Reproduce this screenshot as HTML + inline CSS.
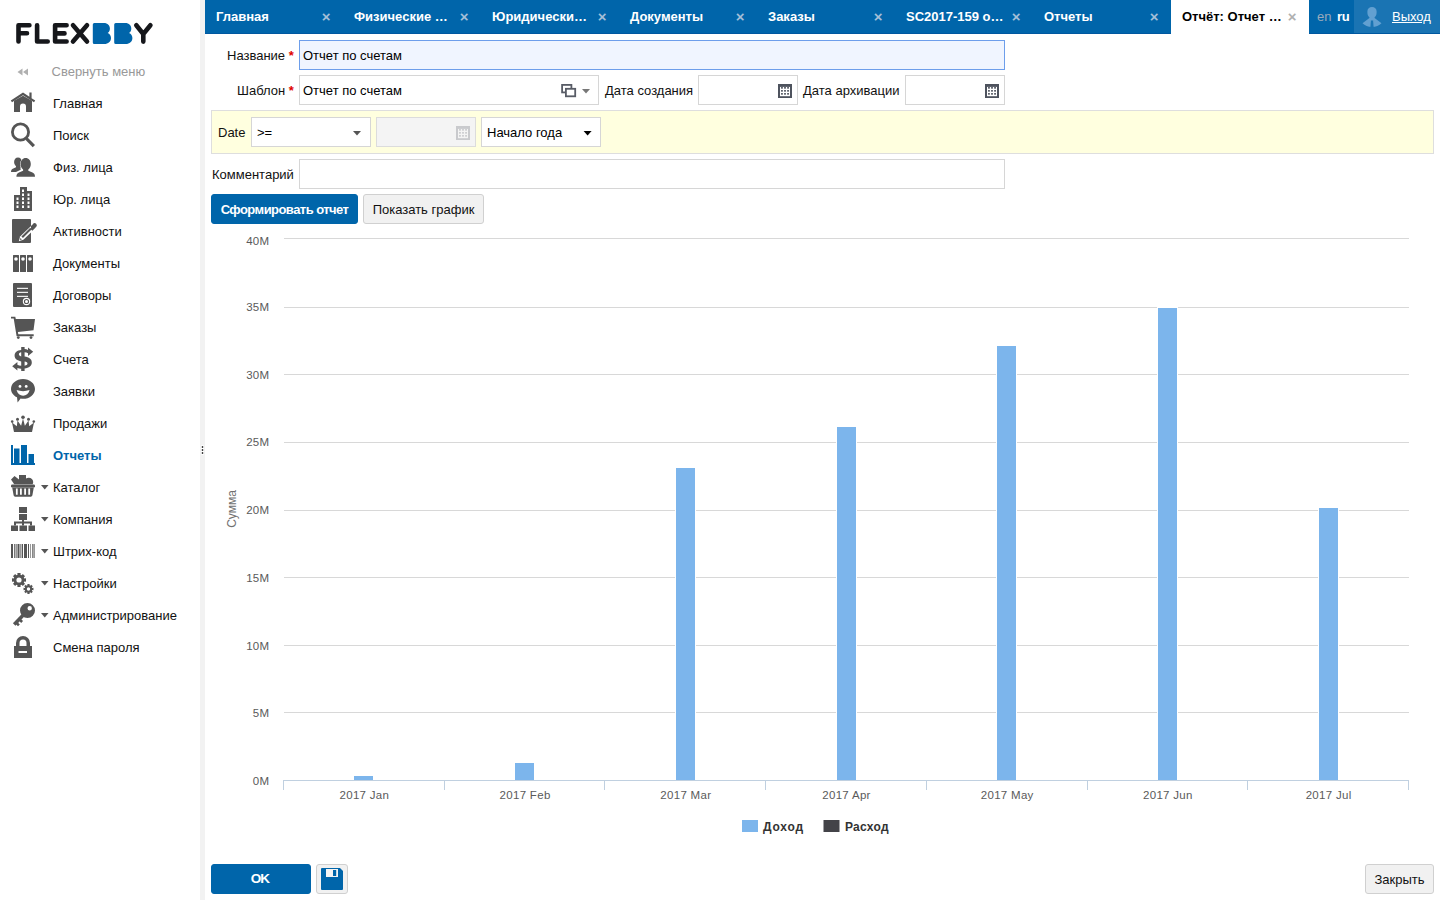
<!DOCTYPE html>
<html><head><meta charset="utf-8">
<style>
*{box-sizing:border-box;margin:0;padding:0}
html,body{width:1440px;height:900px;overflow:hidden;background:#fff;font-family:"Liberation Sans",sans-serif;font-size:14px;color:#000}
.abs{position:absolute}
#side{position:absolute;left:0;top:0;width:200px;height:900px;background:#fff}
#split{position:absolute;left:200px;top:0;width:5px;height:900px;background:#f2f2f2}
#tabs{position:absolute;left:205px;top:0;width:1235px;height:34px;background:#0065aa;border-bottom:1px solid #0058a0}
.tab{position:absolute;top:0;height:34px;width:138px;color:#fff;font-weight:bold;font-size:13px;line-height:33px;padding-left:11px}
.tab .x{position:absolute;right:12.500px;top:0;font-weight:bold;font-size:15px;color:#a3bfd8}
.tab.act{background:#fff;color:#000}
.tab.act .x{color:#b0b0b0}
.mi{position:absolute;left:53px;margin-top:1px;font-size:13px;line-height:16px;color:#111}
.lbl{position:absolute;margin-top:1px;font-size:13px;line-height:16px;color:#111;white-space:nowrap}
.inp{position:absolute;height:30px;border:1px solid #d6d6d6;background:#fff;font-size:13px;line-height:28px;padding-left:3px;padding-top:1px;white-space:nowrap}
.btn{position:absolute;height:30px;border-radius:3px;font-size:13px;line-height:28px;padding-top:1px;text-align:center;white-space:nowrap}
.btn.blue{background:#0065aa;color:#fff;font-weight:bold;border:1px solid #0065aa;letter-spacing:-0.55px}
.btn.grey{background:#f1f1f1;color:#111;border:1px solid #d0d0d0}
.red{color:#e00000;font-weight:bold}
</style></head><body>
<div id="side">
<svg class="abs" style="left:0;top:0" width="200" height="700" viewBox="0 0 200 700"><g fill="none" stroke="#16171b" stroke-width="4.600" stroke-linecap="round" stroke-linejoin="round">
<path d="M18.500 41.500V25.300H29.400M18.500 33.300H27"/>
<path d="M37.100 25.300V41.500H47.700"/>
<path d="M66.600 25.300H55.100V41.500H66.600M55.100 33.400H64.500"/>
<path d="M73 25.300L87 41.500M87 25.300L73 41.500"/>
<path d="M136.300 25.300L143.300 34L150.400 25.300M143.300 34V41.600"/>
</g>
<path d="M94.3 23 H103.8 C107.8 23 109.9 25.5 109.9 28.5 C109.9 30.500 109.1 32 107.64999999999999 33.1 C109.8 34 111.0 36 111.0 38 C111.0 41.500 108.3 44 104.3 44 H94.3 Q92.8 44 92.8 42.500 V24.500 Q92.8 23 94.3 23Z" fill="#0065aa"/><path d="M115.7 23 H125.2 C129.2 23 131.3 25.5 131.3 28.5 C131.3 30.500 130.5 32 129.05 33.1 C131.2 34 132.4 36 132.4 38 C132.4 41.500 129.7 44 125.7 44 H115.7 Q114.2 44 114.2 42.500 V24.500 Q114.2 23 115.7 23Z" fill="#0065aa"/>

<!-- collapse -->
<path d="M22.500 68.500v7l-5-3.500zM28 68.500v7l-5-3.500z" fill="#b0b0b0"/>
<g fill="#555">
<!-- home y=103 -->
<path d="M23 92.600L10.800 100.500l1.200 1.800L23 95.200l11 7.100 1.200-1.800L31.600 98.200V92.600h-2.200v4.200z"/>
<path d="M14 100.800L23 95.800l9 5v11.200h-6V106.500a3 3 0 0 0-6 0V112h-6z"/>
<!-- search y=135 -->
<path d="M20.500 122.500a9.500 9.500 0 1 0 0 19a9.500 9.500 0 0 0 0-19zm0 2.800a6.700 6.700 0 1 1 0 13.400a6.700 6.700 0 0 1 0-13.400z" fill-rule="evenodd"/>
<path d="M25.400 139.800l2.200-2.200 7.400 7.300-2.300 2.300z"/>
<!-- people y=167 -->
<path d="M18 157.500c2.300 0 3.900 1.800 3.900 4.600 0 .5-.1 1-.2 1.500-.8 1.300-1.200 2.900-1.200 4.500 0 .6 0 1.100.2 1.600l-4.700 2.300H11c0-2 .8-3 2.300-3.600l2.700-1.100v-1.100c-1.200-.9-1.900-2.500-1.900-4.100 0-2.800 1.600-4.600 3.900-4.600z"/>
<path stroke="#fff" stroke-width="1" paint-order="stroke" d="M25.700 158c3 0 5.100 2.400 5.100 5.900 0 2.300-1 4.500-2.500 5.500v1.300l4.200 1.900c1.700.8 2.500 2.100 2.500 4.200H16.400c0-2.100.8-3.400 2.500-4.200l4.200-1.900v-1.300c-1.500-1-2.500-3.200-2.500-5.500 0-3.500 2.100-5.900 5.100-5.900z"/>
<!-- building y=199 -->
<path d="M14 211V195h6V187h7v4h5v20z M16.500 197.500h2v2.500h-2z M16.500 201.500h2v2.500h-2z M16.500 205.500h2v2.500h-2z M22 189.500h2v2.500h-2z M22 193.500h2v2.500h-2z M22 197.500h2v2.500h-2z M22 201.500h2v2.500h-2z M22 205.500h2v2.500h-2z M27.500 193.500h2v2.500h-2z M27.500 197.500h2v2.500h-2z M27.500 201.500h2v2.500h-2z M27.500 205.500h2v2.500h-2z" fill-rule="evenodd"/>
<!-- activities y=231 -->
<rect x="12" y="219" width="19" height="24" rx="1"/>
</g>
<path d="M30.800 229.200L33.800 226.200" stroke="#555" stroke-width="4.400" stroke-linecap="butt"/>
<path d="M34.300 225.700L34.600 225.400" stroke="#555" stroke-width="4.400" stroke-linecap="round"/>
<path d="M18.800 241.200l1.300-4.600L30.800 226.300h.2v6.100L23.400 239.800z" fill="#fff"/>
<path d="M22.200 237.200L31 228.600" stroke="#555" stroke-width="2.100"/>
<path d="M19.900 240.100l.6-2 1.400 1.400z" fill="#555"/>
<g fill="#555">
<!-- documents y=263 -->
<path d="M13 255.500a.5.500 0 0 1 .5-.5h5a.5.500 0 0 1 .5.500v16a.5.500 0 0 1-.5.500h-5a.5.500 0 0 1-.5-.5z M16 257.200a1.800 1.800 0 1 0 0 3.600a1.800 1.800 0 0 0 0-3.600z" fill-rule="evenodd"/>
<path d="M20 255.500a.5.500 0 0 1 .5-.5h5a.5.500 0 0 1 .5.500v16a.5.500 0 0 1-.5.500h-5a.5.500 0 0 1-.5-.5z M23 257.200a1.800 1.800 0 1 0 0 3.600a1.800 1.800 0 0 0 0-3.600z" fill-rule="evenodd"/>
<path d="M27 255.500a.5.500 0 0 1 .5-.5h5a.5.500 0 0 1 .5.500v16a.5.500 0 0 1-.5.500h-5a.5.500 0 0 1-.5-.5z M30 257.200a1.800 1.800 0 1 0 0 3.600a1.800 1.800 0 0 0 0-3.600z" fill-rule="evenodd"/>
<!-- contracts y=295 -->
<rect x="13" y="283" width="19" height="24" rx="1"/>
</g>
<g fill="#fff"><rect x="17" y="287.800" width="11" height="1.100"/><rect x="17" y="291.800" width="11" height="1.100"/><rect x="17" y="295.800" width="11" height="1.100"/>
<path d="M26.500 297.800a3.700 3.700 0 1 0 0 7.400a3.700 3.700 0 0 0 0-7.400zm0 1.100a2.600 2.600 0 1 1 0 5.200a2.600 2.600 0 0 1 0-5.200z" fill-rule="evenodd"/><circle cx="26.500" cy="301.500" r="1.500"/></g>
<g fill="#555">
<!-- cart y=327 -->
<path d="M11 316.800h4.300l.5 2.200H35l-1.500 11.200-15.600 1.900.4 2.100H33.700v2H16.600L13.700 318.600H11z"/>
<circle cx="18.300" cy="337.600" r="1.400"/><circle cx="31" cy="337.600" r="1.400"/>
<!-- dollar y=359 -->
<path d="M21.200 347h3.400v2.100c1.300.1 2.400.4 3.400.9v-2.600l5.200 4.300-5.200 4.300v-2.700c-1-.6-2.100-.9-3.400-1v4.100c4.400.9 7.200 2.200 7.200 6 0 3.400-2.700 5.600-7.200 6V371h-3.400v-2.200c-1.400-.1-2.700-.4-3.800-.9v2.600l-5.200-4.300 5.200-4.300v2.800c1.100.6 2.400 1 3.800 1.100v-4.400c-4-.9-6.600-2.300-6.600-5.800 0-3.200 2.500-5.300 6.600-5.600z M21.200 352.300c-1.500.2-2.300.8-2.300 2 0 1.100.7 1.700 2.300 2.100z M24.600 361.600v4.100c1.900-.2 2.900-.9 2.900-2.100s-.9-1.600-2.900-2z" fill-rule="evenodd"/>
<!-- smile y=391 -->
<path d="M23 379c6.600 0 12 4.400 12 9.900s-5.400 9.900-12 9.900c-.8 0-1.600-.1-2.400-.2l-3 4-.6-5.300c-3.600-1.800-6-4.900-6-8.400 0-5.500 5.400-9.900 12-9.900z"/>
</g>
<g fill="#fff"><circle cx="20" cy="386.400" r="1.400"/><circle cx="26.200" cy="386.400" r="1.400"/><path d="M16.600 390.100Q23 392.400 29.600 390.100C28.700 393.700 26.200 395.800 23.100 395.800S17.500 393.700 16.600 390.100z"/></g>
<g fill="#555">
<!-- crown y=423 -->
<circle cx="23" cy="417.200" r="1.800"/><circle cx="17.500" cy="419.200" r="1.500"/><circle cx="28.500" cy="419.200" r="1.500"/><circle cx="12.200" cy="421.600" r="1.300"/><circle cx="33.800" cy="421.600" r="1.300"/>
<path d="M12 422.500l4.800 3.700.7-5.700 3.600 5.300L23 418.500l1.900 7.300 3.600-5.300.7 5.700 4.800-3.700-2 9.500H14z"/>
</g>
<!-- reports y=455 (blue) -->
<g fill="#0065aa"><path d="M11 445h2v18h22v2H11z"/><rect x="14" y="448.500" width="5.500" height="14.500"/><rect x="21" y="445" width="6" height="18"/><rect x="28.500" y="454" width="5.500" height="9"/></g>
<g fill="#555">
<!-- basket y=487 -->
<path d="M11 479.500l3.500-3.500 4.500 3.500V475h7v3.600c.8-.5 1.700-.8 2.700-.8 2.500 0 4.500 1.900 4.500 4.200 0 .8-.2 1.500-.600 2.200H14.200z"/>
<rect x="11" y="484.500" width="24" height="3" rx="1.200"/>
<path d="M12.200 487.500h21.600l-1.400 7.800c-.2.800-.8 1.400-1.600 1.400H15.200c-.8 0-1.400-.6-1.600-1.400z M15.900 488.600v6.200h1.800v-6.200z M20 488.600v6.200h1.800v-6.200z M24.200 488.600v6.200h1.800v-6.200z M28.300 488.600v6.200h1.800v-6.200z" fill-rule="evenodd"/>
<!-- company y=519 -->
<rect x="19" y="507" width="8" height="6"/><rect x="19" y="514" width="8" height="6"/>
<path d="M22 520h2v1.500h8v4h-2v-2h-6v2h-2v-2h-6v2h-2v-4h8z"/>
<rect x="11" y="525.500" width="7" height="5.500"/><rect x="19.500" y="525.500" width="7.500" height="5.500"/><rect x="28.500" y="525.500" width="6.500" height="5.500"/>
<!-- barcode y=551 -->
<rect x="11" y="544" width="2" height="14"/><rect x="14" y="544" width="0.800" height="14"/><rect x="15.600" y="544" width="1" height="14"/><rect x="17.500" y="544" width="2" height="14"/><rect x="20.400" y="544" width="1" height="14"/><rect x="22" y="544" width="1" height="14"/><rect x="24" y="544" width="3" height="14"/><rect x="28" y="544" width="1" height="14"/><rect x="30.400" y="544" width="0.600" height="14"/><rect x="32.300" y="544" width="1.200" height="14"/><rect x="34.400" y="544" width="0.600" height="14"/>
<!-- gears y=583 -->
<path d="M24.29 578.51 L26.01 578.37 L26.01 581.63 L24.29 581.49 L23.80 582.69 L25.11 583.81 L22.81 586.11 L21.69 584.80 L20.49 585.29 L20.63 587.01 L17.37 587.01 L17.51 585.29 L16.31 584.80 L15.19 586.11 L12.89 583.81 L14.20 582.69 L13.71 581.49 L11.99 581.63 L11.99 578.37 L13.71 578.51 L14.20 577.31 L12.89 576.19 L15.19 573.89 L16.31 575.20 L17.51 574.71 L17.37 572.99 L20.63 572.99 L20.49 574.71 L21.69 575.20 L22.81 573.89 L25.11 576.19 L23.80 577.31Z M21.60 580.00 A2.6 2.6 0 1 0 16.40 580.00 A2.6 2.6 0 1 0 21.60 580.00Z" fill-rule="evenodd"/>
<path d="M32.16 587.97 L33.47 587.85 L33.47 590.15 L32.16 590.03 L31.82 590.86 L32.83 591.70 L31.20 593.33 L30.36 592.32 L29.53 592.66 L29.65 593.97 L27.35 593.97 L27.47 592.66 L26.64 592.32 L25.80 593.33 L24.17 591.70 L25.18 590.86 L24.84 590.03 L23.53 590.15 L23.53 587.85 L24.84 587.97 L25.18 587.14 L24.17 586.30 L25.80 584.67 L26.64 585.68 L27.47 585.34 L27.35 584.03 L29.65 584.03 L29.53 585.34 L30.36 585.68 L31.20 584.67 L32.83 586.30 L31.82 587.14Z M30.20 589.00 A1.7 1.7 0 1 0 26.80 589.00 A1.7 1.7 0 1 0 30.20 589.00Z" fill-rule="evenodd"/>
<!-- key y=615 -->
<path d="M27.500 603a7.500 7.500 0 1 0 0 15a7.500 7.500 0 0 0 0-15z M29.700 606.100a2.200 2.200 0 1 0 0 4.400a2.200 2.200 0 0 0 0-4.400z" fill-rule="evenodd"/>
<path d="M24.500 613.800L14.200 624.400" stroke="#555" stroke-width="3.600" fill="none"/>
<path d="M16 622.400L18.900 625.300M19.300 619.200L22.100 622" stroke="#555" stroke-width="2.600" fill="none"/>
<!-- lock y=647 -->
<path d="M14 646h18v12H14z M18.500 651v2h8.500v-2z" fill-rule="evenodd"/>
<path d="M17.750 646.500V643a5.250 5.250 0 0 1 10.500 0v3.500" fill="none" stroke="#555" stroke-width="3.500"/>
</g>
<path d="M41 484.5h7.500l-3.750 4.500z" fill="#555" transform="translate(0 0.5)"/><path d="M41 516.5h7.500l-3.750 4.500z" fill="#555" transform="translate(0 0.5)"/><path d="M41 548.5h7.500l-3.750 4.500z" fill="#555" transform="translate(0 0.5)"/><path d="M41 580.5h7.500l-3.750 4.500z" fill="#555" transform="translate(0 0.5)"/><path d="M41 612.5h7.500l-3.750 4.500z" fill="#555" transform="translate(0 0.5)"/>
</svg>

<div class="mi" style="left:51.500px;top:62.500px;color:#999">Свернуть меню</div>
<div class="mi" style="top:95px">Главная</div>
<div class="mi" style="top:127px">Поиск</div>
<div class="mi" style="top:159px">Физ. лица</div>
<div class="mi" style="top:191px">Юр. лица</div>
<div class="mi" style="top:223px">Активности</div>
<div class="mi" style="top:255px">Документы</div>
<div class="mi" style="top:287px">Договоры</div>
<div class="mi" style="top:319px">Заказы</div>
<div class="mi" style="top:351px">Счета</div>
<div class="mi" style="top:383px">Заявки</div>
<div class="mi" style="top:415px">Продажи</div>
<div class="mi" style="top:447px;color:#0065aa;font-weight:bold">Отчеты</div>
<div class="mi" style="top:479px">Каталог</div>
<div class="mi" style="top:511px">Компания</div>
<div class="mi" style="top:543px">Штрих-код</div>
<div class="mi" style="top:575px">Настройки</div>
<div class="mi" style="top:607px">Администрирование</div>
<div class="mi" style="top:639px">Смена пароля</div>

</div>
<div id="split"><svg class="abs" style="left:0;top:444px" width="5" height="12" viewBox="0 0 5 12"><g fill="#fff"><rect x="1" y="1" width="3" height="10" rx="1"/></g><g fill="#444"><rect x="1.800" y="2" width="1.400" height="2"/><rect x="1.800" y="5" width="1.400" height="2"/><rect x="1.800" y="8" width="1.400" height="2"/></g></svg></div>
<div id="tabs">
<div class="tab" style="left:0px">Главная<span class="x">×</span></div>
<div class="tab" style="left:138px">Физические …<span class="x">×</span></div>
<div class="tab" style="left:276px">Юридически…<span class="x">×</span></div>
<div class="tab" style="left:414px">Документы<span class="x">×</span></div>
<div class="tab" style="left:552px">Заказы<span class="x">×</span></div>
<div class="tab" style="left:690px">SC2017-159 о…<span class="x">×</span></div>
<div class="tab" style="left:828px">Отчеты<span class="x">×</span></div>
<div class="tab act" style="left:966px">Отчёт: Отчет …<span class="x">×</span></div>
<div class="abs" style="left:1112px;top:0;line-height:33px;font-size:13px;color:#9ab;">en</div>
<div class="abs" style="left:1132px;top:0;line-height:33px;font-size:13px;color:#fff;font-weight:bold;letter-spacing:-0.3px">ru</div>
<div class="abs" style="left:1149px;top:0;width:86px;height:34px;background:#1a74b3;border-bottom:1px solid #0058a0"></div>
<svg class="abs" style="left:1156px;top:5px" width="22" height="24" viewBox="0 0 22 24"><path d="M11 1.900c2.700 0 4.600 1.700 4.600 4.400v1.500c0 2-.9 3.600-2 4.500v.8l6.900 5.200c-2.300 2.400-5.600 3.800-9.500 3.800s-7.200-1.400-9.500-3.800l6.900-5.200v-.8c-1.100-.9-2-2.500-2-4.500V6.300c0-2.700 1.900-4.400 4.600-4.400z" fill="#62a0d1"/><path d="M9.900 15.600h2.200l.5 6.500h-3.200z" fill="#1a74b3"/></svg>
<div class="abs" style="left:1187px;top:0;line-height:33px;font-size:13px;color:#fff;text-decoration:underline">Выход</div>

</div>

<div class="lbl" style="left:227px;top:47px">Название <span class="red">*</span></div>
<div class="inp" style="left:299px;top:40px;width:706px;border-color:#6d9eeb;background:#f0f5ff">Отчет по счетам</div>
<div class="lbl" style="left:237px;top:82px">Шаблон <span class="red">*</span></div>
<div class="inp" style="left:299px;top:75px;width:300px">Отчет по счетам</div>
<svg class="abs" style="left:561px;top:84px" width="16" height="14" viewBox="0 0 16 14"><rect x="1.100" y="0.900" width="9.300" height="7.500" fill="#fff" stroke="#585c66" stroke-width="1.800"/><rect x="4.900" y="4.800" width="9.300" height="7.500" fill="#fff" stroke="#585c66" stroke-width="1.800"/></svg>
<svg class="abs" style="left:582px;top:89px" width="8" height="5" viewBox="0 0 8 5"><path d="M0 0h8L4 4.500z" fill="#777"/></svg>
<div class="lbl" style="left:605px;top:82px">Дата создания</div>
<div class="inp" style="left:698px;top:75px;width:100px"></div>
<svg class="abs" style="left:778px;top:84px" width="14" height="14" viewBox="0 0 14 14"><rect width="14" height="14" fill="#4e535e"/><rect x="2" y="2.900" width="10" height="9.300" fill="#fff"/><g fill="#4e535e"><rect x="3.1" y="3" width="1.700" height="1.700"/><rect x="3.1" y="6" width="1.700" height="1.700"/><rect x="3.1" y="9" width="1.700" height="1.700"/><rect x="6.15" y="3" width="1.700" height="1.700"/><rect x="6.15" y="6" width="1.700" height="1.700"/><rect x="6.15" y="9" width="1.700" height="1.700"/><rect x="9.2" y="3" width="1.700" height="1.700"/><rect x="9.2" y="6" width="1.700" height="1.700"/><rect x="9.2" y="9" width="1.700" height="1.700"/></g></svg>
<div class="lbl" style="left:803px;top:82px">Дата архивации</div>
<div class="inp" style="left:905px;top:75px;width:100px"></div>
<svg class="abs" style="left:985px;top:84px" width="14" height="14" viewBox="0 0 14 14"><rect width="14" height="14" fill="#4e535e"/><rect x="2" y="2.900" width="10" height="9.300" fill="#fff"/><g fill="#4e535e"><rect x="3.1" y="3" width="1.700" height="1.700"/><rect x="3.1" y="6" width="1.700" height="1.700"/><rect x="3.1" y="9" width="1.700" height="1.700"/><rect x="6.15" y="3" width="1.700" height="1.700"/><rect x="6.15" y="6" width="1.700" height="1.700"/><rect x="6.15" y="9" width="1.700" height="1.700"/><rect x="9.2" y="3" width="1.700" height="1.700"/><rect x="9.2" y="6" width="1.700" height="1.700"/><rect x="9.2" y="9" width="1.700" height="1.700"/></g></svg>
<div class="abs" style="left:211px;top:110px;width:1223px;height:44px;background:#ffffdf;border:1px solid #dedede"></div>
<div class="lbl" style="left:218px;top:124px">Date</div>
<div class="inp" style="left:251px;top:117px;width:120px;padding-left:5px">&gt;=</div>
<svg class="abs" style="left:353px;top:131px" width="8" height="5" viewBox="0 0 8 5"><path d="M0 0h8L4 4.500z" fill="#555"/></svg>
<div class="inp" style="left:376px;top:117px;width:100px;background:#f4f4f4;border-color:#dcdcdc"></div>
<svg class="abs" style="left:456px;top:126px" width="14" height="14" viewBox="0 0 14 14"><rect width="14" height="14" fill="#c9cacd"/><rect x="2" y="2.900" width="10" height="9.300" fill="#f4f4f4"/><g fill="#c9cacd"><rect x="3.1" y="3" width="1.700" height="1.700"/><rect x="3.1" y="6" width="1.700" height="1.700"/><rect x="3.1" y="9" width="1.700" height="1.700"/><rect x="6.15" y="3" width="1.700" height="1.700"/><rect x="6.15" y="6" width="1.700" height="1.700"/><rect x="6.15" y="9" width="1.700" height="1.700"/><rect x="9.2" y="3" width="1.700" height="1.700"/><rect x="9.2" y="6" width="1.700" height="1.700"/><rect x="9.2" y="9" width="1.700" height="1.700"/></g></svg>
<div class="inp" style="left:481px;top:117px;width:120px;padding-left:5px">Начало года</div>
<svg class="abs" style="left:583px;top:131px" width="9" height="5" viewBox="0 0 9 5"><path d="M0.600 0h8L4.600 4.400z" fill="#000"/></svg>
<div class="lbl" style="left:212px;top:166px">Комментарий</div>
<div class="inp" style="left:299px;top:159px;width:706px"></div>
<div class="btn blue" style="left:211px;top:194px;width:147px">Сформировать отчет</div>
<div class="btn grey" style="left:363px;top:194px;width:121px">Показать график</div>

<svg class="abs" style="left:205px;top:225px" width="1235" height="630" viewBox="205 225 1235 630" font-family="Liberation Sans, sans-serif">
<path d="M284 238.5H1409" stroke="#d8d8d8" stroke-width="1"/>
<path d="M284 307.5H1409" stroke="#d8d8d8" stroke-width="1"/>
<path d="M284 374.5H1409" stroke="#d8d8d8" stroke-width="1"/>
<path d="M284 442.5H1409" stroke="#d8d8d8" stroke-width="1"/>
<path d="M284 510.5H1409" stroke="#d8d8d8" stroke-width="1"/>
<path d="M284 577.5H1409" stroke="#d8d8d8" stroke-width="1"/>
<path d="M284 645.5H1409" stroke="#d8d8d8" stroke-width="1"/>
<path d="M284 712.5H1409" stroke="#d8d8d8" stroke-width="1"/>
<rect x="353.5" y="775.5" width="20" height="5.0" fill="#7cb5ec" stroke="#fff" stroke-width="1"/>
<rect x="514.5" y="762.5" width="20" height="18.0" fill="#7cb5ec" stroke="#fff" stroke-width="1"/>
<rect x="675.5" y="467.5" width="20" height="313.0" fill="#7cb5ec" stroke="#fff" stroke-width="1"/>
<rect x="836.5" y="426.5" width="20" height="354.0" fill="#7cb5ec" stroke="#fff" stroke-width="1"/>
<rect x="996.5" y="345.5" width="20" height="435.0" fill="#7cb5ec" stroke="#fff" stroke-width="1"/>
<rect x="1157.5" y="307.5" width="20" height="473.0" fill="#7cb5ec" stroke="#fff" stroke-width="1"/>
<rect x="1318.5" y="507.5" width="20" height="273.0" fill="#7cb5ec" stroke="#fff" stroke-width="1"/>
<path d="M283 780.500H1409" stroke="#c0d0e0" stroke-width="1"/>
<path d="M283.5 780V790" stroke="#c0d0e0" stroke-width="1"/>
<path d="M444.5 780V790" stroke="#c0d0e0" stroke-width="1"/>
<path d="M604.5 780V790" stroke="#c0d0e0" stroke-width="1"/>
<path d="M765.5 780V790" stroke="#c0d0e0" stroke-width="1"/>
<path d="M926.5 780V790" stroke="#c0d0e0" stroke-width="1"/>
<path d="M1087.5 780V790" stroke="#c0d0e0" stroke-width="1"/>
<path d="M1247.5 780V790" stroke="#c0d0e0" stroke-width="1"/>
<path d="M1408.5 780V790" stroke="#c0d0e0" stroke-width="1"/>
<text x="269.200" y="244.60" text-anchor="end" font-size="11.500" fill="#5a5a5a" letter-spacing="0.2">40M</text>
<text x="269.200" y="311.35" text-anchor="end" font-size="11.500" fill="#5a5a5a" letter-spacing="0.2">35M</text>
<text x="269.200" y="379.40" text-anchor="end" font-size="11.500" fill="#5a5a5a" letter-spacing="0.2">30M</text>
<text x="269.200" y="446.20" text-anchor="end" font-size="11.500" fill="#5a5a5a" letter-spacing="0.2">25M</text>
<text x="269.200" y="514.15" text-anchor="end" font-size="11.500" fill="#5a5a5a" letter-spacing="0.2">20M</text>
<text x="269.200" y="582.30" text-anchor="end" font-size="11.500" fill="#5a5a5a" letter-spacing="0.2">15M</text>
<text x="269.200" y="649.60" text-anchor="end" font-size="11.500" fill="#5a5a5a" letter-spacing="0.2">10M</text>
<text x="269.200" y="717.30" text-anchor="end" font-size="11.500" fill="#5a5a5a" letter-spacing="0.2">5M</text>
<text x="269.200" y="784.95" text-anchor="end" font-size="11.500" fill="#5a5a5a" letter-spacing="0.2">0M</text>
<text x="364.4" y="799.200" text-anchor="middle" font-size="11.500" fill="#5a5a5a" letter-spacing="0.3">2017 Jan</text>
<text x="525.1" y="799.200" text-anchor="middle" font-size="11.500" fill="#5a5a5a" letter-spacing="0.3">2017 Feb</text>
<text x="685.8" y="799.200" text-anchor="middle" font-size="11.500" fill="#5a5a5a" letter-spacing="0.3">2017 Mar</text>
<text x="846.5" y="799.200" text-anchor="middle" font-size="11.500" fill="#5a5a5a" letter-spacing="0.3">2017 Apr</text>
<text x="1007.2" y="799.200" text-anchor="middle" font-size="11.500" fill="#5a5a5a" letter-spacing="0.3">2017 May</text>
<text x="1167.9" y="799.200" text-anchor="middle" font-size="11.500" fill="#5a5a5a" letter-spacing="0.3">2017 Jun</text>
<text x="1328.6" y="799.200" text-anchor="middle" font-size="11.500" fill="#5a5a5a" letter-spacing="0.3">2017 Jul</text>
<text x="236" y="509" text-anchor="middle" font-size="12" fill="#707070" transform="rotate(-90 236 509)">Сумма</text>
<rect x="742" y="820" width="16" height="12" fill="#7cb5ec"/><text x="763" y="830.600" font-size="12" font-weight="bold" fill="#333" letter-spacing="0.78">Доход</text>
<rect x="823.500" y="820" width="16" height="12" fill="#434348"/><text x="845" y="830.600" font-size="12" font-weight="bold" fill="#333" letter-spacing="0.27">Расход</text>
</svg>

<div class="btn blue" style="left:211px;top:864px;width:100px;font-size:13.500px;letter-spacing:-0.8px;padding-top:0;padding-right:2px">OK</div>
<div class="btn grey" style="left:316px;top:864px;width:32px"></div>
<svg class="abs" style="left:321px;top:868px" width="22" height="22" viewBox="0 0 22 22"><path d="M1 0H19L22 3V21a1 1 0 0 1-1 1H1a1 1 0 0 1-1-1V1a1 1 0 0 1 1-1z" fill="#0065aa"/><rect x="5" y="1" width="12" height="8" fill="#f4f4f4"/><rect x="12" y="2" width="3.200" height="6" fill="#0065aa"/></svg>
<div class="btn grey" style="left:1365px;top:864px;width:69px">Закрыть</div>

</body></html>
